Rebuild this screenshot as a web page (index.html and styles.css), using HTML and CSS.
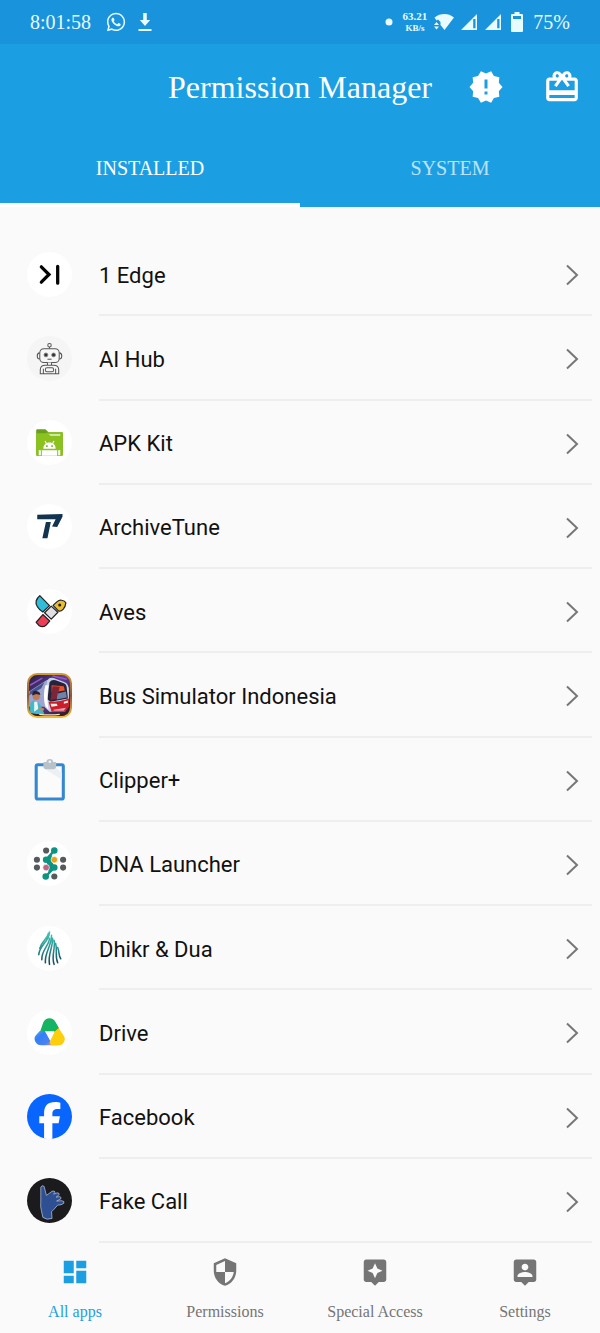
FILE: index.html
```html
<!DOCTYPE html>
<html lang="en">
<head>
  <meta charset="UTF-8">
  <meta name="viewport" content="width=device-width, initial-scale=1.0">
  <title>Permission Manager</title>
  <link rel="stylesheet" href="styles.css">
</head>
<body>
  <div class="status-bar">
    <span class="clock">8:01:58</span>
    <svg class="whatsapp" width="22" height="22" viewBox="0 0 24 24" fill="currentColor"><path d="M12.04 2C6.58 2 2.13 6.45 2.13 11.91C2.13 13.66 2.59 15.36 3.45 16.86L2.05 22L7.3 20.62C8.75 21.41 10.38 21.83 12.04 21.83C17.5 21.83 21.95 17.38 21.95 11.92C21.95 9.27 20.92 6.78 19.05 4.91C17.18 3.03 14.69 2 12.04 2M12.05 3.67C14.25 3.67 16.31 4.53 17.87 6.09C19.42 7.65 20.28 9.72 20.28 11.92C20.28 16.46 16.58 20.15 12.04 20.15C10.56 20.15 9.11 19.76 7.85 19L7.55 18.83L4.43 19.65L5.26 16.61L5.06 16.29C4.24 15 3.8 13.47 3.8 11.91C3.81 7.37 7.5 3.67 12.05 3.67M8.53 7.33C8.37 7.33 8.1 7.39 7.87 7.64C7.65 7.89 7 8.5 7 9.71C7 10.93 7.89 12.1 8 12.27C8.14 12.44 9.76 14.94 12.25 16C12.84 16.27 13.3 16.42 13.66 16.53C14.25 16.72 14.79 16.69 15.22 16.63C15.7 16.56 16.68 16.03 16.89 15.45C17.1 14.87 17.1 14.38 17.04 14.27C16.97 14.17 16.81 14.11 16.56 14C16.31 13.86 15.09 13.26 14.87 13.18C14.64 13.1 14.5 13.06 14.31 13.3C14.15 13.55 13.67 14.11 13.53 14.27C13.38 14.44 13.24 14.46 13 14.34C12.74 14.21 11.94 13.95 11 13.11C10.26 12.45 9.77 11.64 9.62 11.39C9.5 11.15 9.61 11 9.73 10.89C9.84 10.78 10 10.6 10.1 10.45C10.23 10.31 10.27 10.2 10.35 10.04C10.43 9.87 10.39 9.73 10.33 9.61C10.27 9.5 9.77 8.26 9.56 7.77C9.36 7.29 9.16 7.35 9 7.34C8.86 7.34 8.7 7.33 8.53 7.33Z"/></svg>
    <svg width="14" height="18" viewBox="0 0 14 18" fill="currentColor"><path d="M5.2 0h3.6v7h3.4L7 13 1.800 7h3.400zM.5 16h13v2H.5z"/></svg>
    <div class="status-right">
      <svg width="8" height="8" viewBox="0 0 8 8" fill="currentColor"><circle cx="4" cy="4" r="3.500"/></svg>
      <span class="speed"><span>63.21</span><span class="unit">KB/s</span></span>
      <svg class="wifi" width="20" height="18" viewBox="0 0 20 18" fill="currentColor"><path d="M.5 4.500C3.500 2 7 1 10.500 1s6.500 1 9.500 3.500L10.500 17 6.500 12V9L4 6.500 2.500 7.500z"/><path d="M0 12l2.500-3 2.500 3zM0 13.500h5l-2.500 3z"/></svg>
      <svg width="16" height="16" viewBox="0 0 16 16" fill="currentColor"><path fill-rule="evenodd" d="M16 0v16H0zM14.500 5h-2.300v9.300h2.300z"/></svg>
      <svg class="signal" width="16" height="16" viewBox="0 0 16 16" fill="currentColor"><path fill-rule="evenodd" d="M16 0v16H0zM14.500 5h-2.300v9.300h2.300z"/></svg>
      <svg class="battery" width="12" height="20" viewBox="0 0 12 20" fill="currentColor"><path fill-rule="evenodd" d="M3.500 0h5v2H11q1 0 1 1v16q0 1-1 1H1q-1 0-1-1V3q0-1 1-1h2.500zM2 4v3h8V4z"/></svg>
      <span>75%</span>
    </div>
  </div>

  <header class="header">
    <div class="toolbar">
      <h1 class="title">Permission Manager</h1>
      <button class="icon-button" aria-label="Notices">
        <svg width="36" height="36" viewBox="0 0 24 24" fill="currentColor"><path d="M23 12l-2.440-2.780.340-3.680-3.610-.82-1.890-3.180L12 3 8.600 1.540 6.710 4.720l-3.610.81.340 3.680L1 12l2.440 2.780-.340 3.690 3.610.82 1.890 3.180L12 21l3.400 1.460 1.890-3.180 3.610-.82-.340-3.680L23 12zm-10 5h-2v-2h2v2zm0-4h-2V7h2v6z"/></svg>
      </button>
      <button class="icon-button" aria-label="Gift">
        <svg width="38" height="38" viewBox="0 0 24 24" fill="currentColor"><path d="M20 6h-2.180c.11-.31.18-.65.18-1 0-1.660-1.340-3-3-3-1.050 0-1.960.54-2.500 1.350l-.5.67-.5-.68C10.960 2.540 10.050 2 9 2 7.340 2 6 3.340 6 5c0 .35.070.69.180 1H4c-1.110 0-1.990.89-1.990 2L2 19c0 1.110.89 2 2 2h16c1.110 0 2-.89 2-2V8c0-1.110-.89-2-2-2zm-5-2c.55 0 1 .45 1 1s-.45 1-1 1-1-.45-1-1 .45-1 1-1zM9 4c.55 0 1 .45 1 1s-.45 1-1 1-1-.45-1-1 .45-1 1-1zm11 15H4v-2h16v2zm0-5H4V8h5.080L7 10.830 8.620 12 11 8.760l1-1.360 1 1.360L15.380 12 17 10.830 14.920 8H20v6z"/></svg>
      </button>
    </div>
    <div class="tabs">
      <button class="tab active">INSTALLED</button>
      <button class="tab">SYSTEM</button>
    </div>
  </header>

  <main class="app-list">
    <a class="app" href="#">
      <svg class="app-icon" viewBox="0 0 44 44"><circle cx="22" cy="22" r="22" fill="#fff"/><path d="M14 14.500l7.500 7.500-7.500 7.500M30 14v16.500" fill="none" stroke="#050505" stroke-width="3.200" stroke-linecap="round"/></svg>
      <span class="name">1 Edge</span>
    </a>
    <a class="app" href="#">
      <svg class="app-icon" viewBox="0 0 44 44"><circle cx="22" cy="22" r="22" fill="#f5f5f5"/><g fill="#f7f7f7" stroke="#555" stroke-width="1"><path d="M22 10.500v2"/><circle cx="22" cy="9" r="1.700"/><path d="M12.500 16.500q-2.500 0-2.500 3t2.500 3M31.500 16.500q2.500 0 2.500 3t-2.500 3"/><rect x="12.500" y="12.500" width="19" height="13.500" rx="4"/><path d="M20 26v2.500h4V26M13 37V33q0-4.500 5-4.500h8q5 0 5 4.500v4zM16 37v-5M28 37v-5"/><rect x="18" y="31" width="8" height="4" rx="1.500"/><path d="M20 22.700h4"/></g><g fill="#333" stroke="#888" stroke-width=".8"><circle cx="18.500" cy="18.500" r="1.900"/><circle cx="26" cy="18.500" r="1.900"/></g></svg>
      <span class="name">AI Hub</span>
    </a>
    <a class="app" href="#">
      <svg class="app-icon" viewBox="0 0 44 44"><circle cx="22" cy="22" r="22" fill="#fff"/><path d="M9 10q0-1 1-1h8l3 3h13q1 0 1 1v21q0 1-1 1H10q-1 0-1-1z" fill="#689f1b"/><path d="M9 13h9l3-1h14v22q0 1-1 1H10q-1 0-1-1z" fill="#8bc220"/><path d="M21 14h11.500v1.500H23z" fill="#e6f4cd"/><g fill="#fff"><path d="M16 28c0-4 2.500-6 6-6s6 2 6 6zM14.500 29.500h15V35h-15z"/><rect x="11.500" y="29.500" width="2" height="5"/><rect x="30.500" y="29.500" width="2" height="5"/><path d="M17.500 20.500l2 3M26.500 20.500l-2 3" stroke="#fff" stroke-width="1"/></g><circle cx="19.500" cy="25.500" r=".9" fill="#689f1b"/><circle cx="24.500" cy="25.500" r=".9" fill="#689f1b"/></svg>
      <span class="name">APK Kit</span>
    </a>
    <a class="app" href="#">
      <svg class="app-icon" viewBox="0 0 44 44"><circle cx="22" cy="22" r="22" fill="#fff"/><path d="M10 10.500l24.700-.8v2.800L29.500 22.500l-5-.5 3.500-7.200-18 .2zM18.500 17.500h4.800l-3.300 16h-5z" fill="#133451"/></svg>
      <span class="name">ArchiveTune</span>
    </a>
    <a class="app" href="#">
      <svg class="app-icon" viewBox="0 0 44 44"><circle cx="22" cy="22" r="22" fill="#fff"/><g stroke="#222" stroke-width="1.200" stroke-linejoin="round"><path d="M12.500 6.500L22 16.300 15.500 22.500C11 20 8 15 9 11.500q1-3 3.500-5z" fill="#31bdd8"/><path d="M25.500 16l4-3.700q2-1.800 4.500-1.300 3 .5 4 2.500-.5 4-2.500 6.200-2 2.300-4.500 2z" fill="#eebd2b"/><path d="M23.700 16.700l6.500 6-6.500 6.800-6.500-6.300z" fill="#e0e1e4"/><path d="M15.500 25l6.700 6.300-3.700 4.200q-3 2.500-6.500.5L9 32.500z" fill="#ed3e55"/></g><circle cx="32" cy="15.700" r="1.500" fill="#222"/></svg>
      <span class="name">Aves</span>
    </a>
    <a class="app" href="#">
      <svg class="app-icon" viewBox="0 0 44 44">
        <defs>
          <linearGradient id="night" x1="0" y1="0" x2="1" y2="1"><stop offset="0" stop-color="#241b3d"/><stop offset=".45" stop-color="#5e3f96"/><stop offset="1" stop-color="#251427"/></linearGradient>
          <linearGradient id="gold" x1="0" y1="0" x2="0" y2="1"><stop offset="0" stop-color="#d49a35"/><stop offset=".5" stop-color="#8c553a"/><stop offset="1" stop-color="#f0b83b"/></linearGradient>
          <clipPath id="busclip"><rect x="2" y="2" width="40" height="40" rx="8"/></clipPath>
        </defs>
        <rect x="1" y="1" width="42" height="42" rx="9" fill="url(#night)" stroke="url(#gold)" stroke-width="2"/>
        <g clip-path="url(#busclip)">
          <path d="M2 18L19 7l3-1-3 15-2 12H2z" fill="#9ca5cf"/><path d="M3 18l14-9-3 6-12 7z" fill="#46528e"/>
          <path d="M3 12L15 5M25 3l14 3" stroke="#9557c5" stroke-width="1.500"/>
          <path d="M20 7q2-3 6-2l11 4q4 2 4 8v15l-4 6H22l-5-5q0-14 3-26z" fill="#c8d0e4"/>
          <path d="M22 9q2-3 6-2l8 3q3 1 3 6l1 9-17 3-3-2z" fill="#26233b"/>
          <path d="M24 12l12 1 1 4-13 2z" fill="#e6532c"/><path d="M25 13l7 .5-3 12-6 1z" fill="#7e2638"/><path d="M30 20l8-2 1 6-10 2z" fill="#6e83a8"/>
          <path d="M21 28q8 1 20-3v8l-4 5H24z" fill="#c91f2b"/><path d="M23 30l6 0 1 2-6 1zM36 28l4-1v2l-4 1z" fill="#fff2eb"/><path d="M26 36l12-2-2 3H26z" fill="#e7a4ae"/>
          <path d="M18 12q-3 10 0 20l3 4q-2-13 0-24z" fill="#fff"/>
          <path d="M3 31q1-4 4-4t6 4l4 9H3z" fill="#42b9c8"/><path d="M7 28h3l1 7-4 3z" fill="#ebf5f3"/><circle cx="9" cy="23" r="3.500" fill="#c37a55"/><path d="M5 22q0-5 4-4.500t4 4l-4-1z" fill="#282238"/><path d="M12 33l5 2-1 2-5-1z" fill="#cb8360"/>
          <path d="M3 39q18 4 38-1v5H3z" fill="#382023"/><path d="M12 40.500q10 1 20 0" stroke="#f5e8c4" stroke-width="1.300" fill="none"/>
        </g>
      </svg>
      <span class="name">Bus Simulator Indonesia</span>
    </a>
    <a class="app" href="#">
      <svg class="app-icon" viewBox="0 0 44 44"><rect x="9" y="7.500" width="26.500" height="33.500" rx="1.500" fill="#fbfbfc" stroke="#3488d2" stroke-width="3"/><path d="M16 11h13l5 5v6z" fill="#edf0f3"/><path d="M16 6q0-1 1-1h2q0-3 3.300-3t3.200 3h2q1 0 1 1v3q0 3-3 3H19q-3 0-3-3z" fill="#b9c2c9"/><circle cx="22.300" cy="4.700" r="1.200" fill="#f5f7f8"/></svg>
      <span class="name">Clipper+</span>
    </a>
    <a class="app" href="#">
      <svg class="app-icon" viewBox="0 0 44 44"><circle cx="22" cy="22" r="22" fill="#fff"/><path d="M26.700 9.300l-8 9 8 7.700-8.400 8.700" fill="none" stroke="#0c9382" stroke-width="2.400"/><path d="M18.700 18.300l5.500-5 .3 7 3 5.700-6.500 5-.3-4.500z" fill="#0c9382"/><g fill="#0c9382"><circle cx="26.700" cy="9.300" r="3.200"/><circle cx="18.700" cy="18.300" r="3.200"/><circle cx="26.700" cy="26" r="3.200"/><circle cx="18.300" cy="34.700" r="3.200"/></g><g fill="#555a5d"><circle cx="18.700" cy="9.300" r="3"/><circle cx="9.700" cy="18.300" r="3"/><circle cx="35.300" cy="18.300" r="3"/><circle cx="9.700" cy="26" r="3"/><circle cx="35.300" cy="26" r="3"/><circle cx="26.700" cy="34.700" r="3"/></g><circle cx="26.700" cy="18.300" r="3.200" fill="#e5a51b" stroke="#fff" stroke-width=".6"/><circle cx="18.700" cy="26" r="3.200" fill="#bd6683" stroke="#fff" stroke-width=".6"/></svg>
      <span class="name">DNA Launcher</span>
    </a>
    <a class="app" href="#">
      <svg class="app-icon" viewBox="0 0 44 44"><defs><linearGradient id="drop" gradientUnits="userSpaceOnUse" x1="22" y1="6" x2="22" y2="38"><stop offset="0" stop-color="#46c5b4"/><stop offset=".5" stop-color="#278f91"/><stop offset="1" stop-color="#164359"/></linearGradient></defs><circle cx="22" cy="22" r="22" fill="#fff"/><g fill="none" stroke="url(#drop)" stroke-width="1.500" stroke-linecap="round"><path d="M21 7C20 13 14 15 12.500 22M22 6C22 15 12 19 11.500 28M22 12C21.500 20 14 23 14.500 33M24 9C24 20 17 26 18 36M25 12C25.500 21 20 28 22 37.500M26.500 14C28 22 23.500 29 26.500 37.500M28 17C30 24 27 29 30 36M30 21C32 26 30.500 28 33 32"/></g></svg>
      <span class="name">Dhikr &amp; Dua</span>
    </a>
    <a class="app" href="#">
      <svg class="app-icon" viewBox="0 0 44 44"><defs><linearGradient id="blue" x1="0" y1="0" x2="1" y2="1"><stop offset="0" stop-color="#58a8f5"/><stop offset=".35" stop-color="#327ff5"/><stop offset=".75" stop-color="#4b82f2"/><stop offset="1" stop-color="#d88bd0"/></linearGradient></defs><circle cx="22" cy="22" r="22" fill="#fff"/><path d="M13 20.500l3-8.500q2-4 6-4t6 4l3.500 6-5 4H18z" fill="#15b362"/><path d="M12.500 20.500H18l7 14H14q-4 0-5.800-3.500t.3-6z" fill="url(#blue)"/><path d="M31 17.500l5 8q2 3 0 6-1.800 3.200-6 3.200h-6.500l-1.500-3 5-10.500z" fill="#fdce0b"/><path d="M17.500 20.800h9.500L22.300 29z" fill="#fff"/></svg>
      <span class="name">Drive</span>
    </a>
    <a class="app" href="#">
      <svg class="app-icon" viewBox="0 0 44 44"><circle cx="22" cy="22" r="22" fill="#0866ff"/><path d="M16.700 43.600V28.500H12v-6.700h4.700v-2.500c0-7.800 3.500-11.400 11.100-11.400 1.400 0 3.800.3 4.800.6v6.200c-.5-.1-1.400-.1-2.600-.1-3.700 0-5.200 1.400-5.200 5v2.200h7.400l-1.300 6.700h-6.100v15.300q-4 .6-8.100-.2z" fill="#fff"/></svg>
      <span class="name">Facebook</span>
    </a>
    <a class="app" href="#">
      <svg class="app-icon" viewBox="0 0 44 44"><circle cx="22" cy="22" r="22" fill="#1b1b1d"/><path d="M13.500 9q1-2.500 3.200-.8L19 17l5.500-4q2.500-1 3 .8l-1.500 2 3.500-1.300q2.300 0 2 1.800l-3 2.400 3.500-.5q2 .6 1 2.300l-4 2 5-.3q3 .4 2 2.500-2.500 2-6 1.800l-3.500 4-2.500 2.500.5 6.500q-5 2-9-1l-1.500-7q-1-3-.5-8z" fill="#2e4f92" stroke="#bcc8e1" stroke-width=".7" stroke-linejoin="round"/></svg>
      <span class="name">Fake Call</span>
    </a>
  </main>

  <nav class="bottom-nav">
    <a class="nav-item active" href="#">
      <svg width="30" height="30" viewBox="0 0 24 24" fill="currentColor"><path d="M3 13h8V3H3v10zm0 8h8v-6H3v6zm10 0h8V11h-8v10zm0-18v6h8V3h-8z"/></svg>
      <span>All apps</span>
    </a>
    <a class="nav-item" href="#">
      <svg width="30" height="30" viewBox="0 0 24 24" fill="currentColor"><path d="M12 1L3 5v6c0 5.550 3.840 10.740 9 12 5.160-1.260 9-6.450 9-12V5l-9-4zm0 10.990h7c-.53 4.120-3.280 7.790-7 8.940V12H5V6.300l7-3.110v8.800z"/></svg>
      <span>Permissions</span>
    </a>
    <a class="nav-item" href="#">
      <svg width="30" height="30" viewBox="0 0 24 24" fill="currentColor"><path d="M19 2H5c-1.100 0-2 .9-2 2v14c0 1.100.9 2 2 2h4l3 3 3-3h4c1.100 0 2-.9 2-2V4c0-1.100-.9-2-2-2zm-5.120 10.880L12 17l-1.880-4.120L6 11l4.120-1.880L12 5l1.880 4.120L18 11l-4.120 1.880z"/></svg>
      <span>Special Access</span>
    </a>
    <a class="nav-item" href="#">
      <svg width="30" height="30" viewBox="0 0 24 24" fill="currentColor"><path d="M19 2H5c-1.110 0-2 .9-2 2v14c0 1.100.89 2 2 2h4l3 3 3-3h4c1.100 0 2-.9 2-2V4c0-1.100-.9-2-2-2zm-7 3.300c1.490 0 2.700 1.210 2.700 2.700 0 1.490-1.210 2.700-2.700 2.700-1.490 0-2.700-1.210-2.700-2.700 0-1.490 1.210-2.700 2.700-2.700zM18 16H6v-.9c0-2 4-3.100 6-3.100s6 1.100 6 3.100v.9z"/></svg>
      <span>Settings</span>
    </a>
  </nav>

  <script>
    // every row ends with the same chevron
    document.querySelectorAll('.name').forEach(name => {
      name.insertAdjacentHTML('beforeend', '<svg class="chevron" width="14" height="22" viewBox="0 0 14 22"><path d="M2 1.500l10 9.500-10 9.500" fill="none" stroke="currentColor" stroke-width="2"/></svg>');
    });
  </script>
</body>
</html>
```
FILE: styles.css
```css
* {
  box-sizing: border-box;
}
body {
  display: flex;
  flex-direction: column;
  min-height: 100vh;
  margin: 0;
  background-color: #fafafa;
  font-family: "Liberation Serif", "Times New Roman", serif;
}
svg {
  display: block;
  flex-shrink: 0;
}
a {
  color: inherit;
  text-decoration: none;
}
button {
  padding: 0;
  border: none;
  background: none;
  color: inherit;
  font: inherit;
  cursor: pointer;
}
.status-bar {
  display: flex;
  align-items: center;
  height: 44px;
  padding: 0 30px;
  background-color: #1893dc;
  color: #e8fbff;
  font-size: 20px;
}
.whatsapp {
  margin: 0 11px 0 14px;
}
.status-right {
  display: flex;
  align-items: center;
  margin-left: auto;
}
.speed {
  display: flex;
  flex-direction: column;
  align-items: center;
  margin-left: 10px;
  font-size: 11px;
  font-weight: bold;
  line-height: 12px;
}
.unit {
  font-size: 9px;
}
.wifi {
  margin: 0 7px;
}
.signal {
  margin: 0 10px 0 8px;
}
.battery {
  margin-right: 10px;
}
.header {
  background-color: #1c9fe2;
  color: #fff;
}
.toolbar {
  display: flex;
  align-items: center;
  justify-content: flex-end;
  height: 86px;
  padding-right: 19px;
}
.title {
  margin: 0 36px 0 0;
  font-size: 32px;
  font-weight: normal;
}
.icon-button + .icon-button {
  margin-left: 39px;
}
.tabs {
  display: flex;
}
.tab {
  flex: 1;
  height: 77px;
  padding-top: 4px;
  border-bottom: 4px solid transparent;
  font-size: 20px;
  opacity: 0.7;
}
.tab.active {
  border-color: #fff;
  opacity: 1;
}
.app-list {
  display: flex;
  flex: 1;
  flex-direction: column;
  padding-top: 25px;
}
.app {
  display: flex;
  flex: 1;
  align-items: center;
  min-height: 72px;
  padding: 0 8px 0 27px;
}
.app-icon {
  width: 45px;
  height: 45px;
  margin-right: 27px;
}
.name {
  display: flex;
  flex: 1;
  align-items: center;
  align-self: stretch;
  justify-content: space-between;
  padding: 4px 13px 0 0;
  border-bottom: 2px solid #eee;
  color: #111;
  font-family: Roboto, sans-serif;
  font-size: 22px;
}
.chevron {
  color: #777;
}
.bottom-nav {
  display: flex;
  height: 90px;
}
.nav-item {
  display: flex;
  flex: 1;
  flex-direction: column;
  align-items: center;
  padding-top: 14px;
  color: #757575;
  font-size: 16px;
}
.nav-item span {
  margin-top: 16px;
}
.nav-item.active {
  color: #1c9fe2;
}
```
